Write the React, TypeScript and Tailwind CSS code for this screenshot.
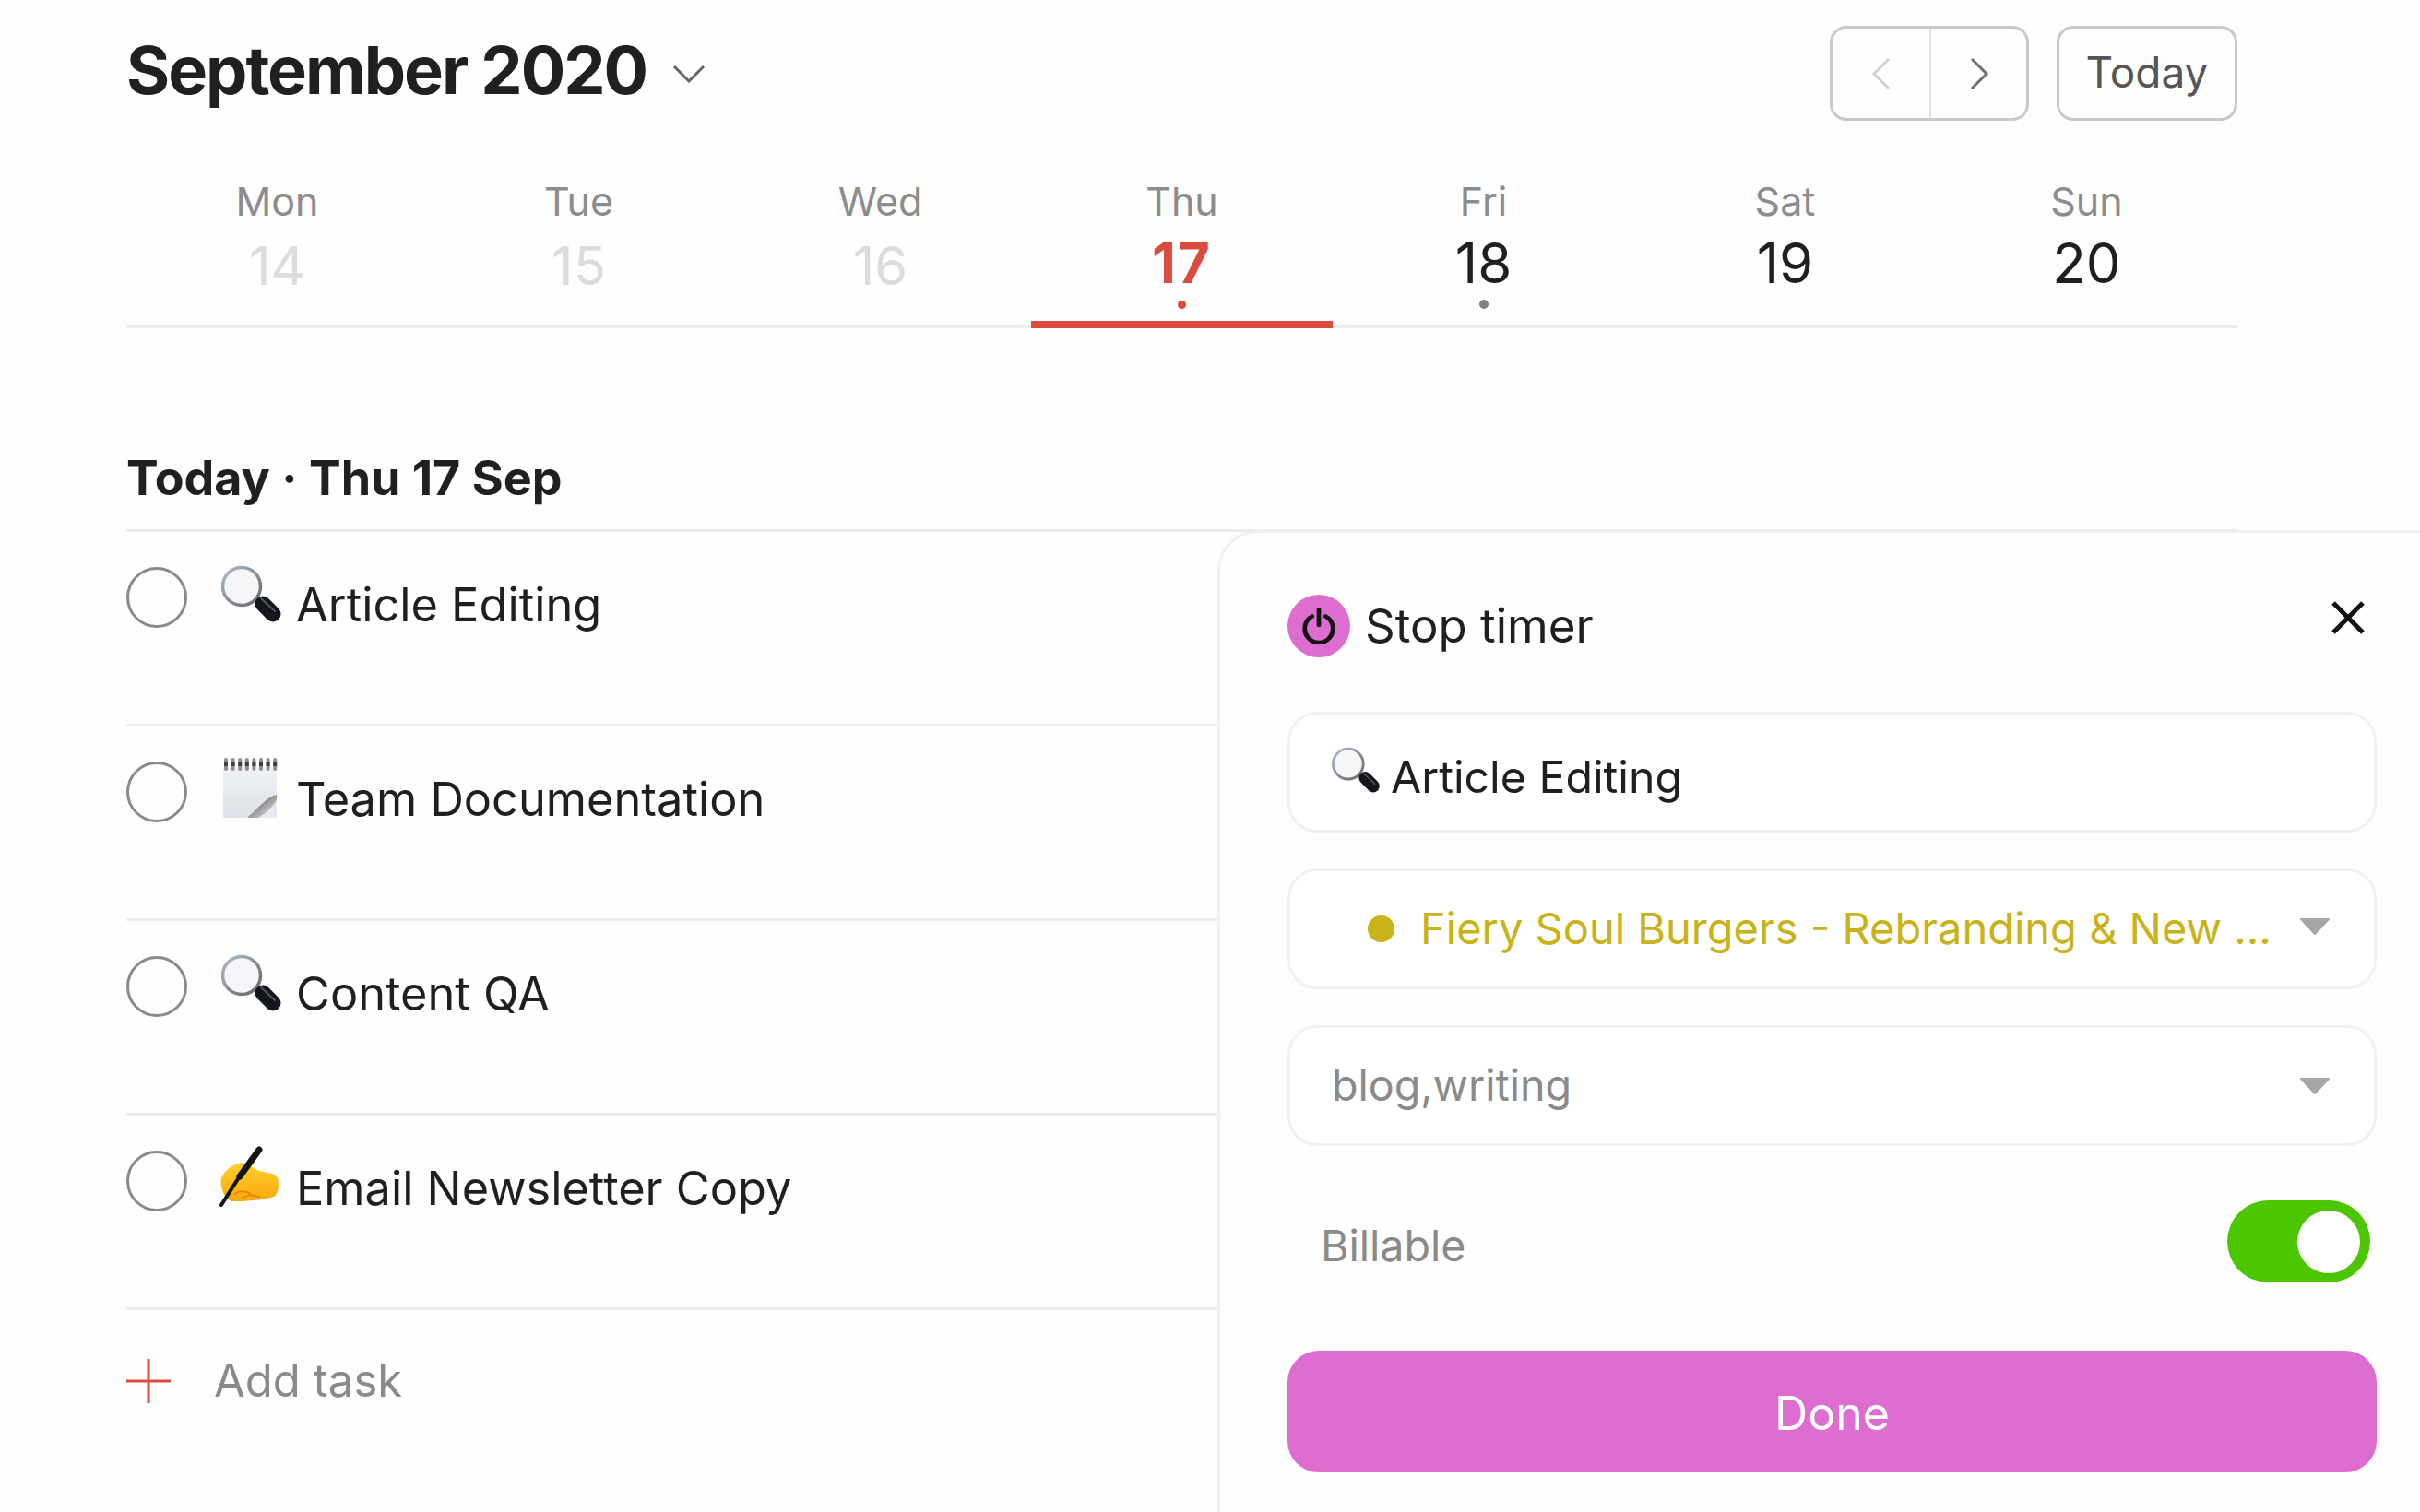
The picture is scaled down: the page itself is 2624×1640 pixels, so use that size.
import type { ReactNode } from "react";

const days = [
  { name: "Mon", date: "14", state: "past" },
  { name: "Tue", date: "15", state: "past" },
  { name: "Wed", date: "16", state: "past" },
  { name: "Thu", date: "17", state: "today" },
  { name: "Fri", date: "18", state: "dot" },
  { name: "Sat", date: "19", state: "" },
  { name: "Sun", date: "20", state: "" },
];

function Magnifier({ size = 70, id }: { size?: number; id: string }) {
  return (
    <svg width={size} height={size} viewBox="0 0 70 70" className="shrink-0">
      <defs>
        <linearGradient id={id} x1="0" y1="0" x2="1" y2="1">
          <stop offset="0" stopColor="#a9c0d6" />
          <stop offset="0.5" stopColor="#8b8e93" />
          <stop offset="1" stopColor="#66686c" />
        </linearGradient>
      </defs>
      <path d="M41 41 L50 49" stroke="#666" strokeWidth="6" />
      <circle cx="26" cy="27" r="20.5" fill="#f6f6f8" stroke={`url(#${id})`} strokeWidth="3.5" />
      <path d="M49 46 L60 57" stroke="#14161b" strokeWidth="17" strokeLinecap="round" />
      <path d="M47 40 L62 54" stroke="#50565f" strokeWidth="2" strokeLinecap="round" />
    </svg>
  );
}

function Notepad({ id }: { id: string }) {
  const rings = [0, 1, 2, 3, 4, 5, 6, 7];
  return (
    <svg width={70} height={70} viewBox="0 0 70 70" className="shrink-0">
      <defs>
        <linearGradient id={id} x1="0" y1="0" x2="1" y2="1">
          <stop offset="0" stopColor="#2e2e30" />
          <stop offset="0.45" stopColor="#8f8f92" />
          <stop offset="1" stopColor="#f6f6f6" />
        </linearGradient>
        <linearGradient id={`${id}-sheet`} x1="0" y1="0" x2="0" y2="1">
          <stop offset="0" stopColor="#f0f2f5" />
          <stop offset="1" stopColor="#dde2e8" />
        </linearGradient>
      </defs>
      <path d="M6 12 H64 V67 H6 Z" fill={`url(#${id}-sheet)`} />
      {rings.map((r) => (
        <g key={r}>
          <rect x={7 + r * 7.6} y="2" width="4" height="14" rx="2" fill="#8f8f92" />
          <rect x={7 + r * 7.6} y="7" width="4" height="4" fill="#3f3f41" />
        </g>
      ))}
      <path d="M64 42 C53 44 45 56 32 67 H44 C53 62 60 55 64 48 Z" fill={`url(#${id})`} />
      <path d="M64 48 C60 55 53 62 44 67 H64 Z" fill="#e6eaef" />
    </svg>
  );
}

function WritingHand({ id }: { id: string }) {
  return (
    <svg width={70} height={70} viewBox="0 0 70 70" className="shrink-0">
      <defs>
        <linearGradient id={id} x1="0" y1="0" x2="0" y2="1">
          <stop offset="0" stopColor="#ffd02e" />
          <stop offset="1" stopColor="#f8a80c" />
        </linearGradient>
      </defs>
      <path
        d="M4 36 C8 27 16 21 26 19 C33 20 38 25 45 28 C53 30 62 30 65 36 C67 44 66 52 61 56 C48 60 32 61 15 61 C7 57 2 46 4 36 Z"
        fill={`url(#${id})`}
      />
      <path d="M18 54 C24 48 32 50 38 55 M26 58 C32 54 40 54 46 57" stroke="#e08a10" strokeWidth="2" fill="none" />
      <path d="M30 24 L4 65" stroke="#141414" strokeWidth="4" strokeLinecap="round" />
      <path d="M45 5 L24 34" stroke="#141414" strokeWidth="7" strokeLinecap="round" />
    </svg>
  );
}

function Caret() {
  return (
    <svg width="34" height="20" viewBox="0 0 34 20">
      <path d="M2 2 H32 L17 18 Z" fill="#a6a6a6" stroke="#a6a6a6" strokeWidth="2" strokeLinejoin="round" />
    </svg>
  );
}

function TaskRow({ icon, title }: { icon: ReactNode; title: string }) {
  return (
    <div className="flex h-[211px] border-t-[3px] border-[#ededed]">
      <span className="mt-[38px] h-[66px] w-[66px] shrink-0 rounded-full border-[3px] border-[#8a8a8a]" />
      <span className="mt-[32px] ml-[33px] h-[70px] w-[70px]">{icon}</span>
      <span className="mt-[44px] ml-[15px] text-[50.5px] leading-[70px] text-[#1f1f1f]">{title}</span>
    </div>
  );
}

function Field({ children }: { children: ReactNode }) {
  return (
    <div className="flex h-[131px] items-center rounded-[32px] border-[3px] border-[#f1f1f1] bg-white">
      {children}
    </div>
  );
}

export default function App() {
  return (
    <div className="relative h-[1640px] w-[2624px] overflow-hidden bg-[#fefefe] font-['Inter','Liberation_Sans',sans-serif]">
      <div className="w-[2426px] pl-[137px] pt-[28px]">
        <header className="flex h-[103px] items-center justify-between">
          <div className="flex items-center">
            <h1 className="-mt-[8px] text-[72px] leading-none font-bold tracking-[-2px] text-[#202020]">
              September 2020
            </h1>
            <svg width="36" height="20" viewBox="0 0 36 20" className="ml-[28px]">
              <path d="M2 2 L18 18 L34 2" fill="none" stroke="#666" strokeWidth="3" />
            </svg>
          </div>
          <div className="flex items-center">
            <div className="flex h-[103px] w-[216px] rounded-[18px] border-[3px] border-[#c9c9c9]">
              <button type="button" className="flex w-[107px] items-center justify-center border-r-2 border-[#dedede]">
                <svg width="24" height="36" viewBox="0 0 24 36">
                  <path d="M20 2 L4 18 L20 34" fill="none" stroke="#d0d0d0" strokeWidth="3" />
                </svg>
              </button>
              <button type="button" className="flex flex-1 items-center justify-center">
                <svg width="24" height="36" viewBox="0 0 24 36">
                  <path d="M4 2 L20 18 L4 34" fill="none" stroke="#707070" strokeWidth="3" />
                </svg>
              </button>
            </div>
            <button
              type="button"
              className="ml-[30px] h-[103px] w-[196px] rounded-[18px] border-[3px] border-[#c9c9c9] pb-[2px] text-[46px] text-[#555]"
            >
              Today
            </button>
          </div>
        </header>

        <div className="mt-[58px] grid h-[167px] grid-cols-7 border-b-[3px] border-[#ededed]">
          {days.map((d) => (
            <div
              key={d.name}
              className={
                d.state === "today"
                  ? "relative flex flex-col items-center border-b-[8px] border-[#dc4c3e] -mb-[3px]"
                  : "relative flex flex-col items-center"
              }
            >
              <span className="text-[43px] leading-[58px] text-[#8c8c8c]">{d.name}</span>
              <span
                className={
                  d.state === "past"
                    ? "mt-[6px] text-[58px] leading-[70px] text-[#dcdcdc]"
                    : d.state === "today"
                      ? "mt-[3px] text-[60px] leading-[70px] font-bold tracking-[2px] text-[#dc4c3e]"
                      : "mt-[3px] text-[60px] leading-[70px] text-[#1f1f1f]"
                }
              >
                {d.date}
              </span>
              {d.state === "today" && (
                <span className="absolute top-[137px] h-[9px] w-[9px] rounded-full bg-[#dc4c3e]" />
              )}
              {d.state === "dot" && (
                <span className="absolute top-[136px] h-[10px] w-[10px] rounded-full bg-[#808080]" />
              )}
            </div>
          ))}
        </div>

        <h2 className="mt-[133px] text-[52px] leading-[60px] font-bold tracking-[0px] text-[#202020]">
          Today · Thu 17 Sep
        </h2>

        <div className="mt-[25px]">
          <TaskRow icon={<Magnifier id="lens1" />} title="Article Editing" />
          <TaskRow icon={<Notepad id="note1" />} title="Team Documentation" />
          <TaskRow icon={<Magnifier id="lens2" />} title="Content QA" />
          <TaskRow icon={<WritingHand id="hand1" />} title="Email Newsletter Copy" />
          <div className="flex h-[156px] items-center border-t-[3px] border-[#ededed]">
            <svg width="48" height="48" viewBox="0 0 48 48">
              <path d="M24 0 V48 M0 24 H48" stroke="#dc4c3e" strokeWidth="3" />
            </svg>
            <span className="ml-[47px] text-[49px] text-[#8a8a8a]">Add task</span>
          </div>
        </div>
      </div>

      {/* timer sheet sits on top of the task list */}
      <aside className="absolute top-[575px] right-0 bottom-0 left-[1320px] rounded-tl-[44px] border-t-[3px] border-l-[3px] border-[#f0f0f0] bg-[#fefefe] pt-[67px] pr-[47px] pl-[73px]">
        <div className="flex h-[68px] items-center">
          <span className="flex h-[68px] w-[68px] items-center justify-center rounded-full bg-[#dd6dcf]">
            <svg width="38" height="40" viewBox="0 0 36 38" fill="none" stroke="#141414" strokeWidth="4.5" strokeLinecap="round">
              <path d="M11 9 A14.5 14.5 0 1 0 25 9" />
              <path d="M18 2 V18" />
            </svg>
          </span>
          <span className="ml-[16px] text-[51px] text-[#1f1f1f]">Stop timer</span>
          <button type="button" className="-mt-[18px] mr-[13px] ml-auto">
            <svg width="36" height="36" viewBox="0 0 36 36">
              <path d="M2 2 L34 34 M34 2 L2 34" stroke="#111" strokeWidth="5" />
            </svg>
          </button>
        </div>

        <div className="mt-[59px] flex flex-col gap-[39px]">
          <Field>
            <span className="ml-[42px] -mt-[6px]">
              <Magnifier size={56} id="lens3" />
            </span>
            <span className="mt-[12px] ml-[11px] text-[48.2px] text-[#1f1f1f]">Article Editing</span>
          </Field>
          <Field>
            <span className="ml-[84px] h-[29px] w-[29px] shrink-0 rounded-full bg-[#c9b21a]" />
            <span className="ml-[28px] text-[47px] whitespace-nowrap text-[#c9b21a]">
              Fiery Soul Burgers - Rebranding &amp; New ...
            </span>
            <span className="mr-[47px] ml-auto -mt-[6px] flex">
              <Caret />
            </span>
          </Field>
          <Field>
            <span className="ml-[45px] text-[46.6px] text-[#8a8a8a]">blog,writing</span>
            <span className="mr-[47px] ml-auto flex">
              <Caret />
            </span>
          </Field>
        </div>

        <div className="mt-[59px] flex h-[89px] items-center justify-between">
          <span className="mt-[10px] ml-[36px] text-[46.6px] text-[#8a8a8a]">Billable</span>
          <span className="mr-[7px] flex h-[89px] w-[155px] items-center justify-end rounded-full bg-[#4cc600] pr-[11px]">
            <span className="h-[68px] w-[68px] rounded-full bg-white" />
          </span>
        </div>

        <button
          type="button"
          className="mt-[74px] h-[132px] w-full rounded-[34px] bg-[#dd6dcf] pt-[5px] text-[50px] text-white"
        >
          Done
        </button>
      </aside>
    </div>
  );
}
